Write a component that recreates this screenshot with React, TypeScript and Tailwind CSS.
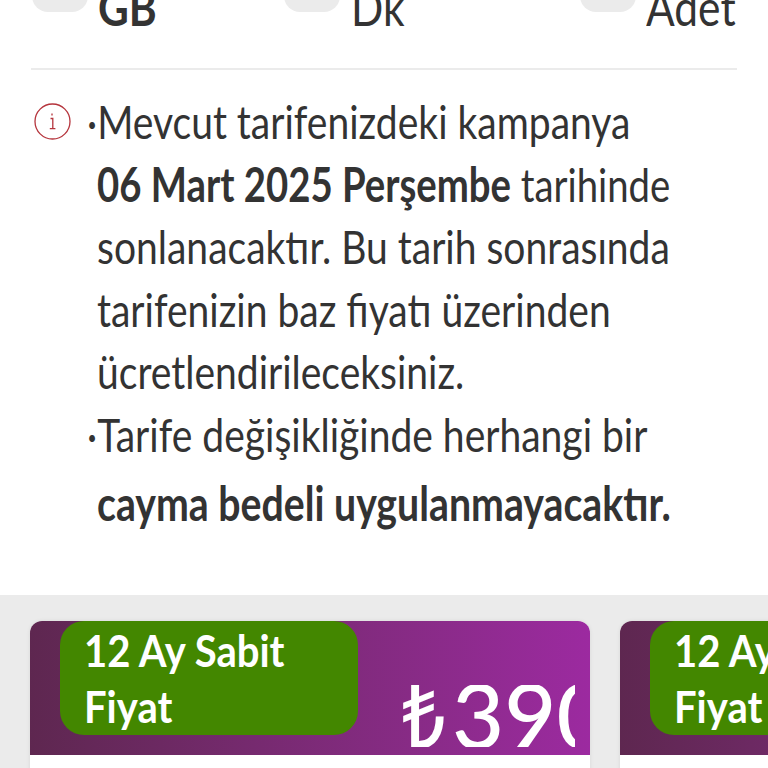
const font = "font-['Lato','Noto_Sans',sans-serif]";

function Allowance({ unit, bold, className }: { unit: string; bold?: boolean; className: string }) {
  return (
    <div className={`flex items-start ${className}`}>
      <div className="w-[56px] h-[56px] rounded-[16px] bg-[#ebebeb] shrink-0" />
      <span className={`block origin-left scale-x-[0.85] text-[50px] leading-[60px] mt-[21px] text-[#333] ${bold ? 'font-bold' : 'font-normal'}`}>
        {unit}
      </span>
    </div>
  );
}

function Line({ children, className = '' }: { children: React.ReactNode; className?: string }) {
  return <div className={`origin-left scale-x-[0.83] whitespace-nowrap ${className}`}>{children}</div>;
}

function OfferCard() {
  return (
    <div className="w-[560px] h-[160px] shrink-0 rounded-t-[12px] overflow-hidden bg-white shadow-[0_0_4px_rgba(0,0,0,0.08)]">
      <div className="h-[134px] pl-[30px] bg-gradient-to-r from-[#5e2750] to-[#9c2aa0] flex items-start">
        <div className="w-[298px] h-[114px] shrink-0 rounded-[24px] bg-[#438700] pl-[24px] pt-[1px] text-white text-[44px] leading-[56px] font-bold">
          <div className="origin-left scale-x-[0.91] whitespace-nowrap">12 Ay Sabit</div>
          <div className="origin-left scale-x-[0.91] whitespace-nowrap">Fiyat</div>
        </div>
        <div className="ml-[44px] mt-[64px] w-[173px] h-[62px] overflow-hidden text-white text-[90px] leading-[58px] font-medium whitespace-nowrap">
          <span className="font-['Noto_Sans',sans-serif] inline-block w-[50px] origin-left scale-x-[0.85]">₺</span>390
        </div>
      </div>
    </div>
  );
}

export default function App() {
  return (
    <div className={`w-[768px] h-[768px] overflow-hidden bg-white ${font}`}>
      <div className="-mt-[44px] h-[639px]">
        <div className="flex pl-[32px] h-[112px]">
          <Allowance unit="GB" bold className="w-[252px] gap-[10px]" />
          <Allowance unit="Dk" className="w-[296px] gap-[11px]" />
          <Allowance unit="Adet" className="gap-[10px]" />
        </div>
        <div className="mx-[31px] h-[2px] bg-[#ebebeb]" />
        <div className="flex pl-[34px] pt-[20px]">
          <svg viewBox="0 0 37 37" className="w-[37px] h-[37px] mt-[13px] shrink-0" fill="none" stroke="#b5343c" strokeWidth="1.3">
            <circle cx="18.5" cy="18.5" r="17.5" />
            <path d="M16.5 15.5h2.3v10M15.8 25.7h5.6M18 10.6v2" />
          </svg>
          <div className="ml-[26px] text-[47px] leading-[62.5px] text-[#333]">
            <Line className="-ml-[10px]">·Mevcut tarifenizdeki kampanya</Line>
            <Line className="scale-x-[0.815]"><b>06 Mart 2025 Perşembe</b> tarihinde</Line>
            <Line>sonlanacaktır. Bu tarih sonrasında</Line>
            <Line>tarifenizin baz fiyatı üzerinden</Line>
            <Line>ücretlendirileceksiniz.</Line>
            <Line className="-ml-[10px]">·Tarife değişikliğinde herhangi bir</Line>
            <Line className="mt-[7px] font-bold scale-x-[0.835]">cayma bedeli uygulanmayacaktır.</Line>
          </div>
        </div>
      </div>
      <div className="h-[173px] bg-[#ebebeb] pt-[26px] pl-[30px] flex gap-[30px] overflow-hidden">
        <OfferCard />
        <OfferCard />
      </div>
    </div>
  );
}
